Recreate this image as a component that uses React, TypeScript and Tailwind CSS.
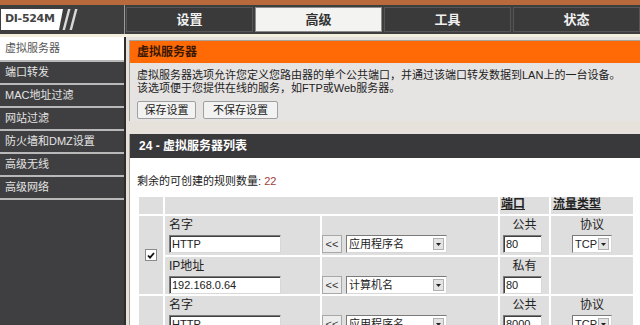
import React from "react";

const font = "font-['Liberation_Sans','Noto_Sans_CJK_SC',sans-serif]";

const menuItems = ["虚拟服务器", "端口转发", "MAC地址过滤", "网站过滤", "防火墙和DMZ设置", "高级无线", "高级网络"];
const tabs = ["设置", "高级", "工具", "状态"];

function TextInput({ value, width }: { value: string; width: string }) {
  return (
    <div
      className={`${width} h-[18px] bg-white border border-t-[#7a7a7a] border-l-[#7a7a7a] border-r-[#d8d8d8] border-b-[#d8d8d8] shadow-[inset_1px_1px_0_#404040] px-[2px] text-[11px] leading-[16px] text-[#222] overflow-hidden whitespace-nowrap`}
    >
      {value}
    </div>
  );
}

function Select({ value, width }: { value: string; width: string }) {
  return (
    <div
      className={`${width} h-[18px] bg-white border border-t-[#7a7a7a] border-l-[#7a7a7a] border-r-[#d8d8d8] border-b-[#d8d8d8] flex items-center pl-[2px] pr-[2px] text-[11px] text-[#222]`}
    >
      <span className="flex-1 whitespace-nowrap overflow-hidden">{value}</span>
      <span className="w-[11px] h-[12px] shrink-0 bg-[#e4e4e4] border border-[#b0b0b0] flex items-center justify-center">
        <svg width="5" height="3" viewBox="0 0 5 3">
          <path d="M0 0h5L2.5 3z" fill="#222" />
        </svg>
      </span>
    </div>
  );
}

function ArrowButton() {
  return (
    <div className="w-[20px] h-[18px] bg-[#ececec] border border-[#a8a8a8] flex items-center justify-center text-[11px] text-[#333] leading-none">
      &lt;&lt;
    </div>
  );
}

function Checkbox() {
  return (
    <div className="w-[12px] h-[12px] bg-white border border-[#8a8a8a] flex items-center justify-center">
      <svg width="8" height="7" viewBox="0 0 8 7">
        <path d="M1 3.5l2 2.2L7 1" stroke="#111" strokeWidth="1.8" fill="none" />
      </svg>
    </div>
  );
}

export default function App() {
  return (
    <div className={`w-[640px] h-[325px] overflow-hidden bg-[#e6e1da] ${font} flex flex-col`}>
      {/* top strip */}
      <div className="h-[5px] bg-[#b86a3c] shrink-0" />

      {/* nav */}
      <div className="h-[29px] bg-[#3e3e3f] flex shrink-0">
        <div className="w-[125px] flex items-center pl-[1px] border-r border-[#9a9a9a]">
          <div className="h-[21px] w-[58px] bg-white flex items-center pl-[4px] text-[11px] font-bold text-[#444] font-['DejaVu_Sans',sans-serif] tracking-[-0.3px]">
            DI-524M
          </div>
          <svg width="22" height="21" viewBox="0 0 22 21">
            <path d="M0 0h4L0 21z" fill="#ffffff" />
            <path d="M9 0h2.5L6 21H3.5z" fill="#d8d8d8" />
            <path d="M16 0h2.5L13 21h-2.5z" fill="#d8d8d8" />
          </svg>
        </div>
        <div className="flex-1 flex gap-[2px] pl-[1px] pt-[2px] pb-[2px]">
          {tabs.map((t) => (
            <div
              key={t}
              className={
                t === "高级"
                  ? "flex-1 flex items-center justify-center bg-[#f3f3f1] border border-[#8c8c8c] text-[13px] font-bold text-[#333]"
                  : "flex-1 flex items-center justify-center bg-[#3a3a3b] border border-[#565656] text-[13px] font-bold text-[#f0f0f0]"
              }
            >
              {t}
            </div>
          ))}
        </div>
      </div>
      <div className="h-[3px] bg-[#f4efdc] shrink-0" />

      {/* main */}
      <div className="flex flex-1 min-h-0">
        {/* sidebar */}
        <div className="w-[124px] bg-[#3f3f41] flex flex-col shrink-0">
          {menuItems.map((item, i) => (
            <div
              key={item}
              className={
                i === 0
                  ? "h-[23px] bg-white text-[#555] text-[11px] flex items-center pl-[5px]"
                  : "h-[23px] text-[#e4e4e4] text-[11px] flex items-center pl-[5px] border-t-2 border-[#b9b9b9]"
              }
            >
              {item}
            </div>
          ))}
          <div className="h-[2px] bg-[#b9b9b9]" />
        </div>
        <div className="w-[2px] bg-[#2e2e2e] shrink-0" />

        {/* content */}
        <div className="flex-1 flex flex-col pl-[3px] pt-[3px] min-w-0">
          {/* box 1 */}
          <div className="border-l border-t border-[#a8a29a] flex flex-col shrink-0">
            <div className="h-[22px] bg-[#ff6a06] flex items-center pl-[7px] text-[12px] font-bold text-[#3a1800]">
              虚拟服务器
            </div>
            <div className="bg-[#e6e4e3] h-[58px] pl-[7px] pt-[6px] text-[11px] leading-[13px] text-[#222]">
              <p className="whitespace-nowrap">虚拟服务器选项允许您定义您路由器的单个公共端口，并通过该端口转发数据到LAN上的一台设备。</p>
              <p className="whitespace-nowrap">该选项便于您提供在线的服务，如FTP或Web服务器。</p>
              <div className="flex gap-[7px] mt-[6px]">
                <div className="h-[18px] w-[59px] justify-center bg-[#f2f2f2] border border-[#a0a0a0] rounded-[2px] flex items-center text-[11px]">
                  保存设置
                </div>
                <div className="h-[18px] w-[75px] justify-center bg-[#f2f2f2] border border-[#a0a0a0] rounded-[2px] flex items-center text-[11px]">
                  不保存设置
                </div>
              </div>
            </div>
          </div>

          {/* box 2 */}
          <div className="mt-[13px] flex-1 flex flex-col border-l border-[#a8a29a]">
            <div className="h-[24px] shrink-0 bg-[#39383b] flex items-center pl-[9px] text-[12px] font-bold text-white">
              24 - 虚拟服务器列表
            </div>
            <div className="flex-1 bg-white pl-[7px] pr-[4px]">
              <div className="pt-[15px] text-[11px] text-[#222] h-[37px]">
                剩余的可创建的规则数量: <span className="text-[#a0403a]">22</span>
              </div>
              <table className="w-[498px] border-separate border-spacing-[2px] text-[11px] text-[#222]">
                <tbody>
                  <tr className="h-[17px]">
                    <td className="w-[24px] bg-[#dedede]" />
                    <td className="bg-[#dedede]" colSpan={2} />
                    <td className="w-[49px] bg-[#dedede] font-bold underline leading-[14px] align-top pl-[1px] text-[12px]">端口</td>
                    <td className="w-[82px] bg-[#dedede] font-bold underline leading-[14px] align-top pl-[2px] text-[12px]">流量类型</td>
                  </tr>
                  {[
                    { pub: "80", priv: "80" },
                    { pub: "8000", priv: "8000" },
                  ].map((row, i) => (
                    <React.Fragment key={i}>
                      <tr className="h-[39px]">
                        <td rowSpan={2} className="bg-[#dedede] align-middle">
                          <div className="flex justify-center">{i === 0 && <Checkbox />}</div>
                        </td>
                        <td className="bg-[#dedede] w-[155px] align-top pl-[4px] pt-[2px]">
                          <div className="leading-[15px] text-[12px]">名字</div>
                          <div className="mt-[2px]">
                            <TextInput value="HTTP" width="w-[112px]" />
                          </div>
                        </td>
                        <td className="bg-[#dedede] align-top pt-[19px]">
                          <div className="flex gap-[4px]">
                            <ArrowButton />
                            <Select value="应用程序名" width="w-[101px]" />
                          </div>
                        </td>
                        <td className="bg-[#dedede] align-top pt-[2px]">
                          <div className="leading-[15px] text-center text-[12px]">公共</div>
                          <div className="mt-[2px] pl-[3px]">
                            <TextInput value={row.pub} width="w-[39px]" />
                          </div>
                        </td>
                        <td className="bg-[#dedede] align-top pt-[2px]">
                          <div className="leading-[15px] text-center text-[12px]">协议</div>
                          <div className="mt-[2px] flex justify-center">
                            <Select value="TCP" width="w-[40px]" />
                          </div>
                        </td>
                      </tr>
                      <tr className="h-[37px]">
                        <td className="bg-[#dedede] align-top pl-[4px] pt-[2px]">
                          <div className="leading-[15px] text-[12px]">IP地址</div>
                          <div className="mt-[2px]">
                            <TextInput value="192.168.0.64" width="w-[112px]" />
                          </div>
                        </td>
                        <td className="bg-[#dedede] align-top pt-[19px]">
                          <div className="flex gap-[4px]">
                            <ArrowButton />
                            <Select value="计算机名" width="w-[101px]" />
                          </div>
                        </td>
                        <td className="bg-[#dedede] align-top pt-[2px]">
                          <div className="leading-[15px] text-center text-[12px]">私有</div>
                          <div className="mt-[2px] pl-[3px]">
                            <TextInput value={row.priv} width="w-[39px]" />
                          </div>
                        </td>
                        <td className="bg-[#dedede]" />
                      </tr>
                    </React.Fragment>
                  ))}
                </tbody>
              </table>
            </div>
          </div>
        </div>
      </div>
    </div>
  );
}
